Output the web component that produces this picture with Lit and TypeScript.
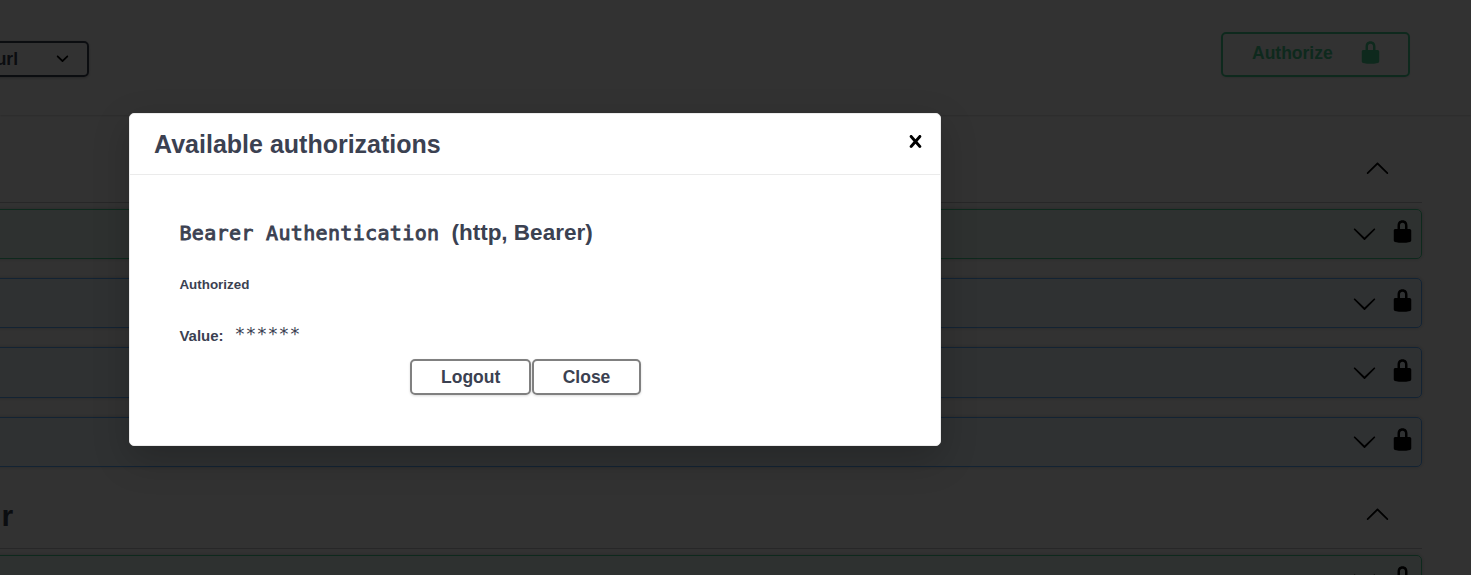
import { LitElement, html, css, svg } from "lit";
import { customElement, property } from "lit/decorators.js";

const ICONS: Record<string, string> = {
  lock: "M15.8 8H14V5.6C14 2.703 12.665 1 10 1 7.334 1 6 2.703 6 5.6V8H4c-.553 0-1 .646-1 1.199V17c0 .549.428 1.139.951 1.307l1.197.387C5.672 18.861 6.55 19 7.1 19h5.8c.549 0 1.428-.139 1.951-.307l1.196-.387c.524-.167.953-.757.953-1.306V9.199C17 8.646 16.352 8 15.8 8zM12 8H8V5.199C8 3.754 8.797 3 10 3c1.203 0 2 .754 2 2.199V8z",
  down: "M17.418 6.109c.272-.268.709-.268.979 0s.271.701 0 .969l-7.908 7.83c-.27.268-.707.268-.979 0l-7.908-7.83c-.27-.268-.27-.701 0-.969.271-.268.709-.268.979 0L10 13.25l7.418-7.141z",
  up: "M17.418 14.908c.272.268.709.268.979 0s.271-.701 0-.969l-7.908-7.83c-.27-.268-.707-.268-.979 0l-7.908 7.83c-.27.268-.27.701 0 .969.271.268.709.268.979 0L10 7.767l7.418 7.141z",
  select: "M13.418 7.859c.271-.268.709-.268.978 0 .27.268.272.701 0 .969l-3.908 3.83c-.27.268-.707.268-.979 0l-3.908-3.83c-.27-.267-.27-.701 0-.969.271-.268.709-.268.978 0L10 11l3.418-3.141z",
  close: "M14.348 14.849c-.469.469-1.229.469-1.697 0L10 11.819l-2.651 3.029c-.469.469-1.229.469-1.697 0-.469-.469-.469-1.229 0-1.697l2.758-3.15-2.759-3.152c-.469-.469-.469-1.228 0-1.697s1.228-.469 1.697 0L10 8.183l2.651-3.031c.469-.469 1.228-.469 1.697 0s.469 1.229 0 1.697l-2.758 3.152 2.758 3.15c.469.469.469 1.229 0 1.698z",
};

@customElement("ui-icon")
class UiIcon extends LitElement {
  @property() name = "lock";
  static styles = css`
    :host { display: block; flex: none; width: 25px; height: 25px; }
    .glyph { display: block; width: 100%; height: 100%; fill: currentColor; }
  `;
  render() {
    return html`<svg class="glyph" viewBox="0 0 20 20">${svg`<path d=${ICONS[this.name]}></path>`}</svg>`;
  }
}

@customElement("op-block")
class OpBlock extends LitElement {
  @property({ reflect: true }) method = "get";
  static styles = css`
    :host {
      display: flex; box-sizing: border-box; height: 50.2px; margin: 0 0 19.1px -12px;
      justify-content: flex-end; align-items: flex-start;
      border: 1px solid #61affe; background: rgba(97, 175, 254, 0.1);
      border-radius: 5px; box-shadow: 0 0 4px rgba(0, 0, 0, 0.19);
      padding: 9.2px 6px 0 0; gap: 13px; color: #000;
    }
    :host([method="post"]) { border-color: #49cc90; background: rgba(73, 204, 144, 0.1); }
    .arrow { margin-top: 2.3px; }
  `;
  render() {
    return html`<ui-icon class="arrow" name="down"></ui-icon><ui-icon name="lock"></ui-icon>`;
  }
}

@customElement("app-root")
class AppRoot extends LitElement {
  static styles = css`
    :host {
      display: block; position: relative; width: 1471px; height: 575px; overflow: hidden;
      background: #fafafa; color: #3b4151; font-family: "Liberation Sans", Arial, sans-serif;
    }
    .scheme {
      display: flex; justify-content: space-between; align-items: flex-start;
      box-sizing: border-box; height: 115px; padding: 32px 61px 0 0;
      background: #fafafa; box-shadow: 0 1px 2px rgba(0, 0, 0, 0.15);
    }
    .select {
      display: flex; align-items: center; justify-content: flex-end; box-sizing: border-box;
      width: 99px; height: 36px; margin: 9px 0 0 -10px; padding-right: 12px; gap: 32px;
      border: 2px solid #3b4151; border-radius: 5px; font-size: 17.5px; font-weight: bold;
      box-shadow: 0 1px 3px rgba(0, 0, 0, 0.25); color: #3b4151;
    }
    .select ui-icon { color: #000; margin-bottom: 1px; }
    .authorize {
      display: flex; align-items: flex-start; justify-content: space-between; box-sizing: border-box;
      width: 189px; height: 45px; padding: 6px 25px 0 29px;
      border: 2px solid #49cc90; border-radius: 5px; color: #49cc90;
      font-size: 17.5px; font-weight: bold; line-height: 26px;
      box-shadow: 0 1px 2px rgba(0, 0, 0, 0.1);
    }
    .sections { width: 1422px; padding-top: 20px; }
    .tag {
      display: flex; justify-content: space-between; align-items: center; box-sizing: border-box;
      height: 67.8px; margin-bottom: 6px; padding: 0 32px 1.6px 0;
      border-bottom: 1px solid rgba(59, 65, 81, 0.3); font-size: 30px; font-weight: bold;
    }
    .tag ui-icon { color: #000; }
    .second { margin-top: -6px; height: 68.9px; padding-bottom: 0; }
    .name { padding: 5px 0 0 1.5px; }
    .backdrop { position: absolute; inset: 0; background: rgba(0, 0, 0, 0.8); }
    .modal {
      position: absolute; left: 128.6px; top: 113.2px; width: 812px; height: 333px; box-sizing: border-box;
      background: #fff; border: 1px solid #ebebeb; border-radius: 5px;
      box-shadow: 0 12.5px 37.5px rgba(0, 0, 0, 0.2);
    }
    .head {
      display: flex; justify-content: space-between; align-items: center; box-sizing: border-box;
      height: 61px; padding: 0 12px 0 24.5px; border-bottom: 1px solid #ebebeb;
    }
    .title { font-size: 25px; font-weight: bold; line-height: 30px; }
    .head ui-icon { color: #000; margin-bottom: 5px; }
    .body { padding: 44px 50px 0 49.8px; }
    .scheme-name { display: flex; align-items: baseline; gap: 12px; height: 28px; font-size: 22.5px; line-height: 28px; font-weight: bold; }
    .mono { font-family: "DejaVu Sans Mono", monospace; font-weight: normal; }
    .scheme-name .mono { font-size: 20px; letter-spacing: 0.34px; -webkit-text-stroke: 0.9px #3b4151; }
    .status { margin-top: 29px; font-size: 13.4px; line-height: 18px; font-weight: bold; }
    .value { display: flex; align-items: flex-start; margin-top: 31px; gap: 11px; height: 25px; font-size: 15px; line-height: 22px; font-weight: bold; }
    .value .mono { font-size: 18px; line-height: 18px; letter-spacing: 0.16px; }
    .actions { display: flex; justify-content: center; margin: 9px 17.6px 0 0; gap: 1px; }
    .btn {
      box-sizing: border-box; height: 36px; padding: 0 28.7px; border: 2px solid gray; border-radius: 5px;
      background: transparent; font-size: 17.5px; line-height: 32px; font-weight: bold;
      box-shadow: 0 1px 2.5px rgba(0, 0, 0, 0.15);
    }
  `;
  render() {
    return html`
      <div class="scheme">
        <div class="select"><span>url</span><ui-icon name="select"></ui-icon></div>
        <div class="authorize"><span>Authorize</span><ui-icon name="lock"></ui-icon></div>
      </div>
      <div class="sections">
        <div class="tag"><span></span><ui-icon name="up"></ui-icon></div>
        ${["post", "get", "get", "get"].map((m) => html`<op-block method=${m}></op-block>`)}
        <div class="tag second"><span class="name">r</span><ui-icon name="up"></ui-icon></div>
        <op-block method="post"></op-block>
      </div>
      <div class="backdrop"></div>
      <div class="modal">
        <div class="head"><span class="title">Available authorizations</span><ui-icon name="close"></ui-icon></div>
        <div class="body">
          <div class="scheme-name"><span class="mono">Bearer Authentication</span><span>(http, Bearer)</span></div>
          <div class="status">Authorized</div>
          <div class="value"><span>Value:</span><span class="mono">******</span></div>
          <div class="actions"><div class="btn">Logout</div><div class="btn">Close</div></div>
        </div>
      </div>
    `;
  }
}
